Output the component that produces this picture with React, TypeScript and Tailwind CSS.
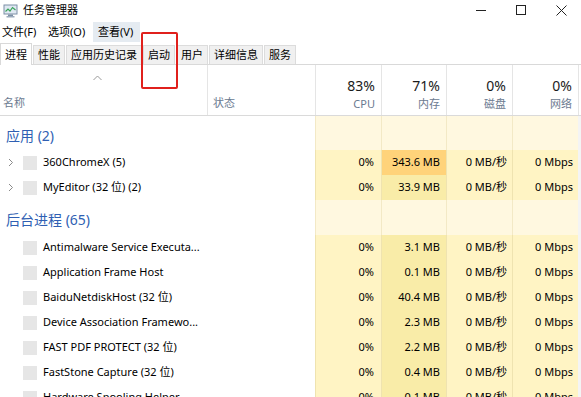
import React from 'react';

type proc = {
    name:string;
    expand?:boolean;
    cpu:string;
    mem:string;
    disk:string;
    net:string;
    hot?:boolean;
}

const apps:proc[] = [
    {name:"360ChromeX (5)",expand:true,cpu:"0%",mem:"343.6 MB",disk:"0 MB/秒",net:"0 Mbps",hot:true},
    {name:"MyEditor (32 位) (2)",expand:true,cpu:"0%",mem:"33.9 MB",disk:"0 MB/秒",net:"0 Mbps"},
];

const background:proc[] = [
    {name:"Antimalware Service Executa...",cpu:"0%",mem:"3.1 MB",disk:"0 MB/秒",net:"0 Mbps"},
    {name:"Application Frame Host",cpu:"0%",mem:"0.1 MB",disk:"0 MB/秒",net:"0 Mbps"},
    {name:"BaiduNetdiskHost (32 位)",cpu:"0%",mem:"40.4 MB",disk:"0 MB/秒",net:"0 Mbps"},
    {name:"Device Association Framewo...",cpu:"0%",mem:"2.3 MB",disk:"0 MB/秒",net:"0 Mbps"},
    {name:"FAST PDF PROTECT (32 位)",cpu:"0%",mem:"2.2 MB",disk:"0 MB/秒",net:"0 Mbps"},
    {name:"FastStone Capture (32 位)",cpu:"0%",mem:"0.4 MB",disk:"0 MB/秒",net:"0 Mbps"},
    {name:"Hardware Spooling Helper",cpu:"0%",mem:"0.1 MB",disk:"0 MB/秒",net:"0 Mbps"},
];

const tabs = ["进程","性能","应用历史记录","启动","用户","详细信息","服务"];

function AppIcon(){
    return (
        <svg width="15" height="14" viewBox="0 0 15 14">
            <rect x="1" y="1" width="13" height="9" fill="#dfe8f2" stroke="#7d8fa6" />
            <polyline points="2.5,7.5 5,5 7,7 9.5,3.5 12.5,6" fill="none" stroke="#3aa35a" strokeWidth="1.2" />
            <rect x="5" y="10.5" width="5" height="1.5" fill="#7d8fa6" />
            <rect x="3.5" y="12" width="8" height="1.5" fill="#9aa9bb" />
        </svg>
    );
}

function Row({p}:{p:proc}){
    return (
        <div className="flex h-[25px] items-center text-[11px] text-[#000]">
            <div className="w-[207px] shrink-0 h-full flex items-center overflow-hidden">
                <div className="w-[22px] shrink-0 flex justify-center">
                    {p.expand && (
                        <svg width="6" height="9" viewBox="0 0 6 9">
                            <polyline points="1,1 4.5,4.5 1,8" fill="none" stroke="#8a8a8a" strokeWidth="1" />
                        </svg>
                    )}
                </div>
                <div className="w-[14px] h-[14px] shrink-0 bg-[#e6e6e6] ml-[1px]" />
                <span className="ml-[6px] whitespace-nowrap">{p.name}</span>
            </div>
            <div className="w-[108px] shrink-0 h-full" />
            <div className="w-[66px] shrink-0 h-full bg-[#fff4c4] border-l border-[#efe3b0] flex items-center justify-end pr-[7px]">{p.cpu}</div>
            <div className={`w-[65px] shrink-0 h-full ${p.hot ? "bg-[#ffd37a]" : "bg-[#f9eca8]"} border-l border-[#efe3b0] flex items-center justify-end pr-[6px]`}>{p.mem}</div>
            <div className="w-[66px] shrink-0 h-full bg-[#fff4c4] border-l border-[#efe3b0] flex items-center justify-end pr-[5px]">{p.disk}</div>
            <div className="w-[66px] shrink-0 h-full bg-[#fff4c4] border-l border-[#efe3b0] flex items-center justify-end pr-[5px]">{p.net}</div>
            <div className="w-[3px] shrink-0 h-full bg-[#f4f4f4]" />
        </div>
    );
}

function GroupRow({label,h}:{label:string;h:string}){
    return (
        <div className={`flex ${h} items-stretch`}>
            <div className="w-[315px] flex items-center pl-[6px] pt-[4px] text-[14px] text-[#2f5fb3]">{label}</div>
            <div className="w-[66px] bg-[#fff8e0] border-l border-[#f3e9c6]" />
            <div className="w-[65px] bg-[#fff8e0] border-l border-[#f3e9c6]" />
            <div className="w-[66px] bg-[#fff8e0] border-l border-[#f3e9c6]" />
            <div className="w-[66px] bg-[#fff8e0] border-l border-[#f3e9c6]" />
            <div className="w-[3px] bg-[#f4f4f4]" />
        </div>
    );
}

function HeadCol({pct,label,w}:{pct:string;label:string;w:string}){
    return (
        <div className={`${w} h-full border-l border-[#e5e5e5] flex flex-col items-end justify-end pr-[6px] pb-[3px]`}>
            <span className="text-[14px] leading-[18px] text-[#1b1b1b]">{pct}</span>
            <span className="text-[11px] leading-[16px] text-[#6b7a90] mt-[1px]">{label}</span>
        </div>
    );
}

export default function App(){
    return (
        <div className="w-[581px] h-[397px] overflow-hidden bg-white relative" style={{fontFamily:'"Noto Sans", "Noto Sans CJK SC", sans-serif'}}>
            {/* title bar */}
            <div className="h-[20px] flex items-center">
                <div className="ml-[3px] mt-[1px]"><AppIcon /></div>
                <span className="ml-[5px] text-[11px] text-[#000]">任务管理器</span>
                <div className="ml-auto flex items-center h-full">
                    <div className="w-[40px] flex justify-center"><div className="w-[10px] h-px bg-[#222]" /></div>
                    <div className="w-[40px] flex justify-center"><div className="w-[10px] h-[10px] border border-[#222]" /></div>
                    <div className="w-[40px] flex justify-center">
                        <svg width="11" height="11" viewBox="0 0 11 11">
                            <path d="M0.5 0.5 L10.5 10.5 M10.5 0.5 L0.5 10.5" stroke="#222" strokeWidth="1" />
                        </svg>
                    </div>
                </div>
            </div>

            {/* menu */}
            <div className="h-[20px] mt-[2px] flex items-stretch text-[11px] text-[#000]">
                <div className="pl-[2px] w-[48px] flex items-center">文件(F)</div>
                <div className="w-[43px] flex items-center">选项(O)</div>
                <div className="ml-[2px] w-[47px] flex items-center pl-[5px] bg-[#e5ebf1]">查看(V)</div>
            </div>

            {/* tabs */}
            <div className="h-[22px] mt-[1px] flex items-end border-b border-[#d9d9d9] text-[11px] text-[#000]">
                {tabs.map((t,i)=>(
                    i === 0 ? (
                        <div key={t} className="h-[22px] px-[4px] pt-[1px] flex items-center bg-white border border-b-0 border-[#d9d9d9] -mb-px">{t}</div>
                    ) : (
                        <div key={t} className="h-[19px] px-[4px] pt-[1px] flex items-center bg-[#f0f0f0] border border-b-0 border-[#dcdcdc] ml-[1px]">{t}</div>
                    )
                ))}
            </div>

            {/* header */}
            <div className="h-[51px] flex border-b border-[#dadada]">
                <div className="w-[207px] h-full relative flex items-end pb-[4px] pl-[3px]">
                    <svg className="absolute left-[93px] top-[10px]" width="9" height="6" viewBox="0 0 9 6">
                        <polyline points="0.5,5 4.5,1 8.5,5" fill="none" stroke="#9a9a9a" strokeWidth="1" />
                    </svg>
                    <span className="text-[11px] text-[#6b7a90]">名称</span>
                </div>
                <div className="w-[108px] h-full border-l border-[#e5e5e5] flex items-end pb-[4px] pl-[5px]">
                    <span className="text-[11px] text-[#6b7a90]">状态</span>
                </div>
                <HeadCol pct="83%" label="CPU" w="w-[66px]" />
                <HeadCol pct="71%" label="内存" w="w-[65px]" />
                <HeadCol pct="0%" label="磁盘" w="w-[66px]" />
                <HeadCol pct="0%" label="网络" w="w-[66px]" />
                <div className="w-[3px] h-full border-l border-[#e5e5e5]" />
            </div>

            <GroupRow label="应用 (2)" h="h-[34px]" />
            {apps.map((p)=>(<Row key={p.name} p={p} />))}
            <GroupRow label="后台进程 (65)" h="h-[35px]" />
            {background.map((p)=>(<Row key={p.name} p={p} />))}

            {/* red highlight box */}
            <div className="absolute left-[141px] top-[32px] w-[37px] h-[57px] border-2 border-[#e0201c] rounded-[2px] pointer-events-none" />
        </div>
    );
}
